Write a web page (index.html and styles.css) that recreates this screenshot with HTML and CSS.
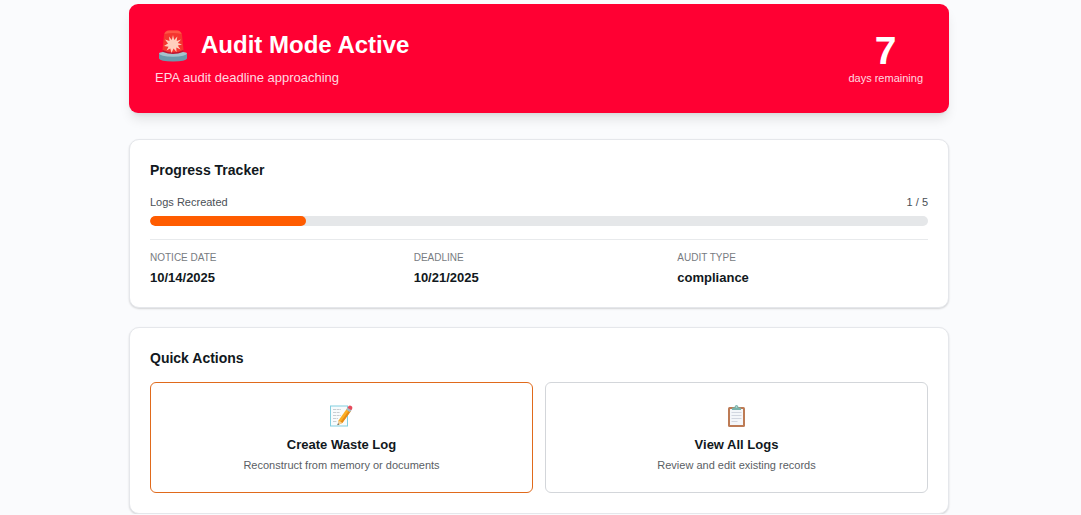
FILE: index.html
```html
<!DOCTYPE html>
<html lang="en">
<head>
    <meta charset="UTF-8">
    <meta name="viewport" content="width=device-width, initial-scale=1.0">
    <title>Audit Mode</title>
    <link rel="stylesheet" href="styles.css">
</head>
<body>
    <main class="wrap">
        <!-- audit banner -->
        <header class="banner">
            <div class="banner-text">
                <div class="banner-title">
                    <svg class="siren" viewBox="0 0 36 32" aria-hidden="true">
                        <path d="M7 25 L9 5 Q9.500 0.500 14 0.500 H22 Q26.500 0.500 27 5 L29 25 Z" fill="#f5352f"/>
                        <path d="M9.500 4 Q10.500 0.500 14 0.500 H22 Q25.500 0.500 26.500 4 Q18 2 9.500 4Z" fill="#ff5646"/>
                        <path d="M7.500 20 Q18 25 28.500 20 V26 H7.500Z" fill="#bd1230"/>
                        <path d="M18 5 L19.200 10 L22.300 6.500 L21.700 11 L26 9.500 L22.800 13 L27 14.500 L22.800 15.500 L25.500 19.500 L21.300 17.500 L21.500 22 L18.600 18.500 L16.500 23 L15.300 18.500 L11.500 20.500 L13.500 16.700 L9 16 L13 13.500 L10 9.500 L14.500 11 L14 6.500 L16.800 10Z" fill="#ffcfbd"/>
                        <path d="M4 23.500 Q18 28 32 23.500 V28.500 Q31 31.500 18 31.500 Q5 31.500 4 28.500Z" fill="#6b9aab"/>
                        <path d="M4 23.500 Q4.500 22 8 22 Q18 26 28 22 Q31.500 22 32 23.500 Q31 26.500 18 26.800 Q5 26.500 4 23.500Z" fill="#a5c3cd"/>
                    </svg>
                    <h1>Audit Mode Active</h1>
                </div>
                <p>EPA audit deadline approaching</p>
            </div>
            <div class="countdown">
                <strong>7</strong>
                <span>days remaining</span>
            </div>
        </header>

        <!-- progress -->
        <section class="card">
            <h2>Progress Tracker</h2>
            <div class="progress-label">
                <span id="logs-label">Logs Recreated</span>
                <span>1 / 5</span>
            </div>
            <div class="bar" role="progressbar" aria-labelledby="logs-label" aria-valuenow="1" aria-valuemin="0" aria-valuemax="5">
                <div class="bar-fill" style="width: 20%"></div>
            </div>
            <dl class="details">
                <div>
                    <dt>NOTICE DATE</dt>
                    <dd>10/14/2025</dd>
                </div>
                <div>
                    <dt>DEADLINE</dt>
                    <dd>10/21/2025</dd>
                </div>
                <div>
                    <dt>AUDIT TYPE</dt>
                    <dd>compliance</dd>
                </div>
            </dl>
        </section>

        <!-- quick actions -->
        <section class="card">
            <h2>Quick Actions</h2>
            <div class="actions">
                <button type="button" class="action primary">
                    <svg class="action-icon" viewBox="1 -1 26 26" aria-hidden="true">
                        <rect x="2.500" y="3" width="17" height="20" fill="#f8fbfc" stroke="#82cfe0"/>
                        <path d="M5 6.500h8M5 9.500h7M5 12.500h8M5 15.500h5M5 18.500h4" stroke="#c8ced2" stroke-width="1" stroke-dasharray="3 .6" fill="none"/>
                        <path d="M10.500 17.500 L19 5.500 L22.800 8.200 L14.300 20 L10 22Z" fill="#fbae24"/>
                        <path d="M12.800 18.800 L21.300 7.100 L22.800 8.200 L14.300 20Z" fill="#e58a15"/>
                        <path d="M10.500 17.500 L14.300 20 L9.500 22.200Z" fill="#f1cf9c"/>
                        <path d="M10 20.200 L11.200 21.300 L9.300 22.300Z" fill="#454b50"/>
                        <path d="M18.200 6.600 L20 4.200 L23.700 6.800 L22 9.200Z" fill="#a7b9bf"/>
                        <path d="M19.500 4.800 Q21 1.700 23.300 3 Q25.500 4.500 23.300 7.300Z" fill="#e64b5c"/>
                    </svg>
                    <span class="action-title">Create Waste Log</span>
                    <span class="action-desc">Reconstruct from memory or documents</span>
                </button>
                <button type="button" class="action">
                    <svg class="action-icon" viewBox="1 -1 26 26" aria-hidden="true">
                        <rect x="5" y="4" width="17" height="20" rx="1.500" fill="#bd7b55"/>
                        <rect x="7" y="6" width="13" height="16" fill="#f4f6fa"/>
                        <path d="M8.500 9.500h10M8.500 12.500h10M8.500 15.500h10M8.500 18.500h6" stroke="#d2d6e0" stroke-width="1" fill="none"/>
                        <path d="M9 7 V5.500 Q9 4.500 10.500 4.500 H11.500 Q11.500 2 13.500 2 Q15.500 2 15.500 4.500 H16.500 Q18 4.500 18 5.500 V7Z" fill="#78b3ab"/>
                        <circle cx="13.500" cy="4" r=".8" fill="#c8e2dc"/>
                    </svg>
                    <span class="action-title">View All Logs</span>
                    <span class="action-desc">Review and edit existing records</span>
                </button>
            </div>
        </section>
    </main>
</body>
</html>
```
FILE: styles.css
```css
* {
    box-sizing: border-box;
}
body {
    margin: 0;
    padding: 4px 3px 0 0;
    background: #fafbfd;
    color: #111820;
    font-family: "Liberation Sans", Arial, sans-serif;
}
h1, h2, p, dl, dd {
    margin: 0;
}
.wrap {
    max-width: 820px;
    margin: 0 auto;
}

/* banner */
.banner {
    display: flex;
    justify-content: space-between;
    align-items: center;
    margin-bottom: 26px;
    padding: 26px;
    border-radius: 9px;
    background: #ff0033;
    color: #fff;
    box-shadow: 0 8px 12px -2px rgba(0, 0, 0, .1), 0 3px 5px -3px rgba(0, 0, 0, .1);
}
.banner-title {
    display: flex;
    gap: 10px;
    margin-bottom: 7px;
}
.siren {
    width: 36px;
    height: 32px;
}
.banner h1 {
    font-size: 24px;
    line-height: 30px;
}
.banner p {
    font-size: 13px;
    line-height: 18px;
    color: #ffd9e0;
}
.countdown {
    text-align: center;
}
.countdown strong {
    display: block;
    font-size: 39px;
    line-height: 38px;
}
.countdown span {
    display: block;
    font-size: 11px;
    line-height: 16px;
    color: #ffd9e0;
}

/* cards */
.card {
    margin-bottom: 19px;
    padding: 20px;
    border: 1px solid #e5e7eb;
    border-radius: 10px;
    background: #fff;
    box-shadow: 0 1px 2px rgba(0, 0, 0, .16);
}
.card:last-child {
    margin-bottom: 0;
}
.card h2 {
    margin-bottom: 14px;
    font-size: 14px;
    line-height: 20px;
}

/* progress bar */
.progress-label {
    display: flex;
    justify-content: space-between;
    margin-bottom: 6px;
    font-size: 11px;
    line-height: 16px;
    color: #4a4f56;
}
.bar {
    height: 10px;
    border-radius: 5px;
    background: #e5e7e9;
    overflow: hidden;
}
.bar-fill {
    height: 100%;
    border-radius: 5px;
    background: #ff5c00;
}
.details {
    display: grid;
    grid-template-columns: repeat(3, 1fr);
    gap: 13px;
    margin-top: 13px;
    padding-top: 12px;
    border-top: 1px solid #e8eaec;
}
.details dt {
    margin-bottom: 5px;
    font-size: 10px;
    line-height: 12px;
    color: #777b81;
}
.details dd {
    font-size: 13px;
    font-weight: bold;
    line-height: 18px;
}

/* action buttons */
.actions {
    display: grid;
    grid-template-columns: 1fr 1fr;
    gap: 12px;
}
.action {
    display: flex;
    flex-direction: column;
    align-items: center;
    padding: 19px;
    border: 1px solid #d3d6da;
    border-radius: 6px;
    background: #fff;
    color: inherit;
    font-family: inherit;
    cursor: pointer;
}
.action.primary {
    border-color: #e06a1c;
}
.action-icon {
    width: 26px;
    height: 26px;
    margin-bottom: 8px;
}
.action-title {
    margin-bottom: 3px;
    font-size: 13px;
    font-weight: bold;
    line-height: 18px;
}
.action-desc {
    font-size: 11px;
    line-height: 16px;
    color: #5a5e64;
}
```
